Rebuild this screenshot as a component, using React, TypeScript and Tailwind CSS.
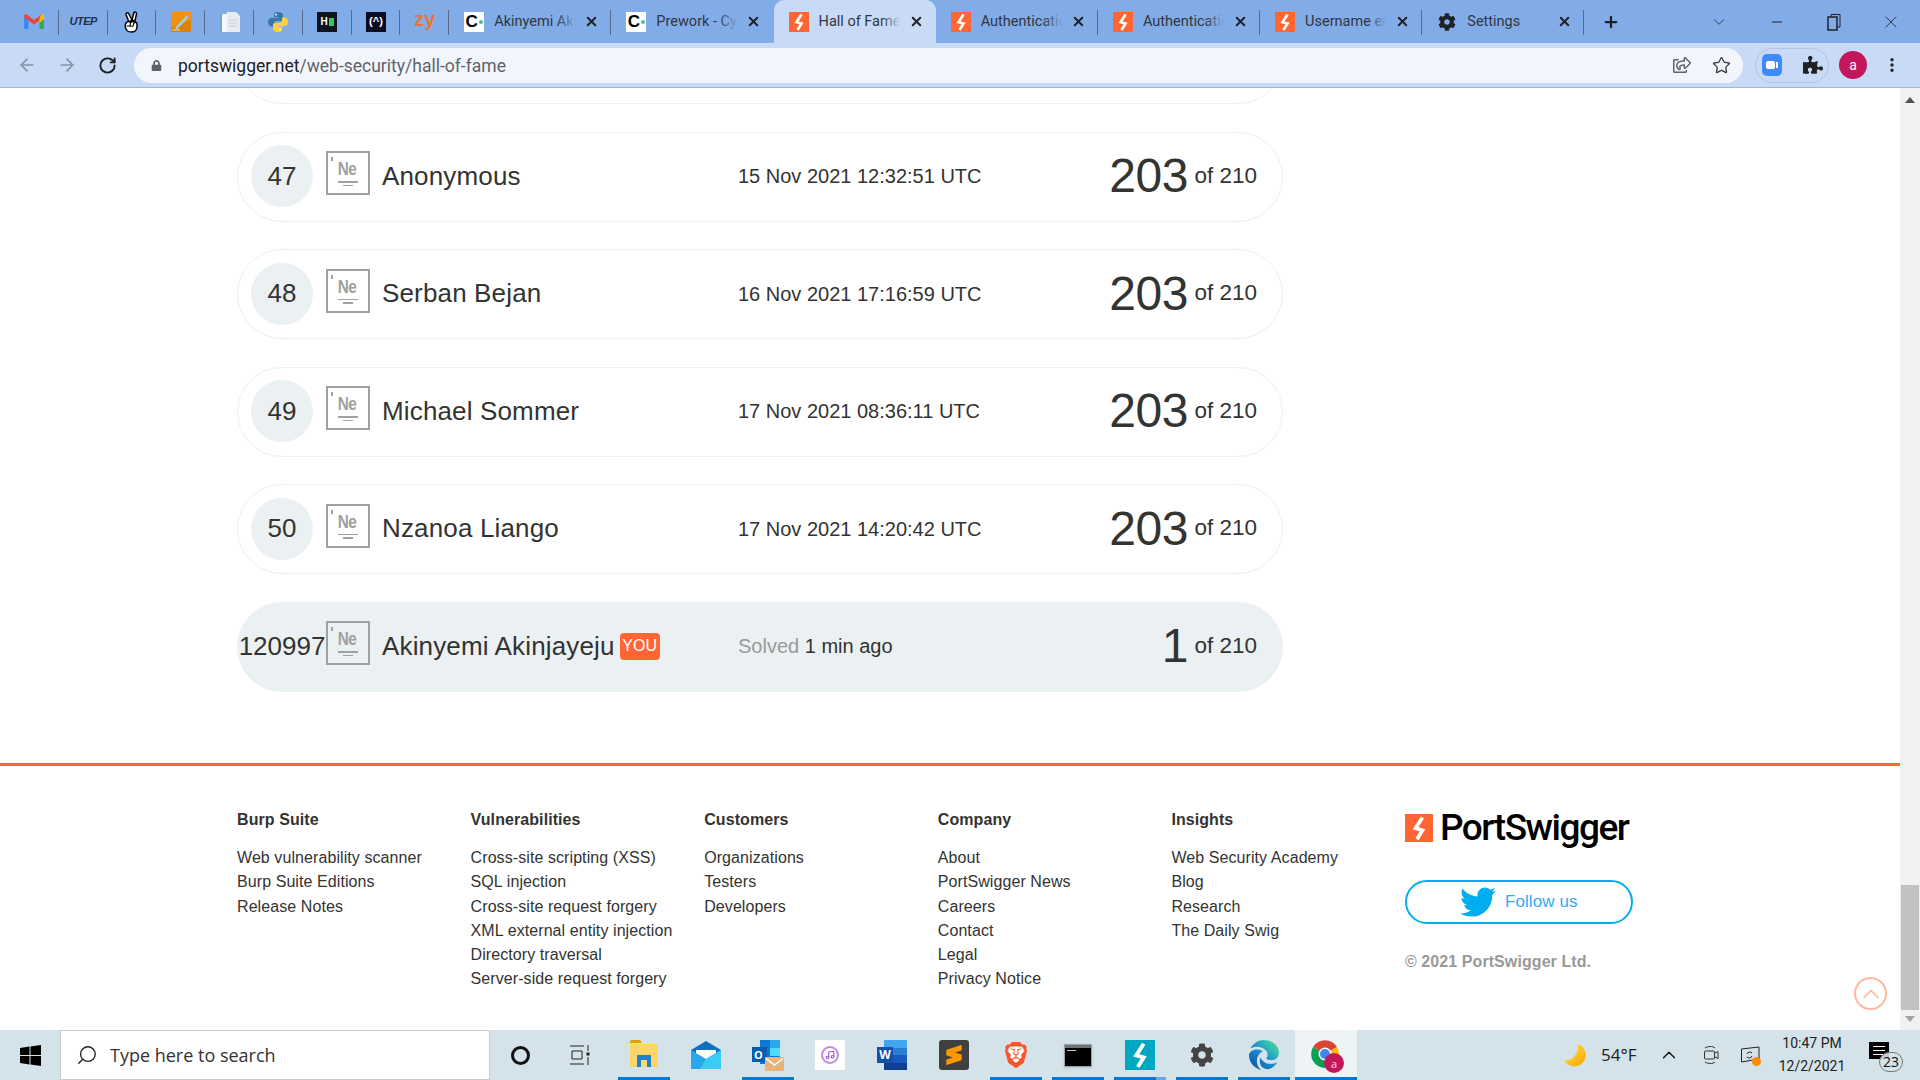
import type { ReactNode } from "react"
import { ArrowLeft, ArrowRight, ChevronDown, ChevronUp, EllipsisVertical, Minus, Music, Plus, RotateCw, Search, Star, X } from "lucide-react"
import { FaCog, FaLock, FaPuzzlePiece, FaRegShareSquare, FaTwitter } from "react-icons/fa"
import { FaEdge } from "react-icons/fa6"
import { SiBrave, SiSublimetext } from "react-icons/si"

const ROWS = [
  { rank: 47, name: "Anonymous", date: "15 Nov 2021 12:32:51 UTC" },
  { rank: 48, name: "Serban Bejan", date: "16 Nov 2021 17:16:59 UTC" },
  { rank: 49, name: "Michael Sommer", date: "17 Nov 2021 08:36:11 UTC" },
  { rank: 50, name: "Nzanoa Liango", date: "17 Nov 2021 14:20:42 UTC" },
]

const FOOTER = [
  { title: "Burp Suite", links: ["Web vulnerability scanner", "Burp Suite Editions", "Release Notes"] },
  {
    title: "Vulnerabilities",
    links: [
      "Cross-site scripting (XSS)",
      "SQL injection",
      "Cross-site request forgery",
      "XML external entity injection",
      "Directory traversal",
      "Server-side request forgery",
    ],
  },
  { title: "Customers", links: ["Organizations", "Testers", "Developers"] },
  { title: "Company", links: ["About", "PortSwigger News", "Careers", "Contact", "Legal", "Privacy Notice"] },
  { title: "Insights", links: ["Web Security Academy", "Blog", "Research", "The Daily Swig"] },
]

function Bolt({ size, bg, className = "" }: { size: number; bg: string; className?: string }) {
  return (
    <svg width={size} height={size} viewBox="0 0 20 20" className={className}>
      <rect width="20" height="20" fill={bg} />
      <path d="M12.5 2.5 7.5 10.2l5 1.4L8.5 18" fill="none" stroke="#fff" strokeWidth="2.6" />
    </svg>
  )
}

function GmailIcon() {
  return (
    <svg width="20" height="15" viewBox="0 0 20 15">
      <path d="M0 3v10.5A1.5 1.5 0 0 0 1.5 15H4.500V5z" fill="#4285f4" />
      <path d="M20 3v10.500a1.500 1.500 0 0 1-1.500 1.500H15.500V5z" fill="#34a853" />
      <path d="M0 3 10 10.500 20 3 17.500 .5 10 6 2.500 .5C1 -.5 0 1 0 3z" fill="#ea4335" />
      <path d="M15.500 4 15.500 8.700 20 5.300V2.500C20 .5 18.500 -.4 17 .7z" fill="#fbbc04" />
    </svg>
  )
}

function PeaceIcon() {
  return (
    <svg width="20" height="22" viewBox="0 0 20 22" fill="#fff" stroke="#000" strokeWidth="1.500">
      <path d="M7 11 4 3.500a1.400 1.400 0 0 1 2.600-1L10 9z" />
      <path d="M10 9l1.800-7a1.400 1.400 0 0 1 2.700.7L13 10z" />
      <path d="M5 11c-1.500 1-2 3-1.500 5.500C4 19.500 6.500 21 9.500 21s5.500-2 5.500-5v-3c0-1.500-1.500-2-2.500-1.500-1-1.200-3-1.200-4 0-.8-1-2.500-1.300-3.500-.5z" />
      <path d="M8.500 11.500 8 15M12 12l-1 3M5 15c2 0 5 0 6 .5" fill="none" strokeWidth="1.200" />
    </svg>
  )
}

function PencilIcon() {
  return (
    <svg width="20" height="20" viewBox="0 0 20 20">
      <rect width="20" height="20" fill="#f0920f" />
      <path d="M0 16 20 8v12H0z" fill="#d88308" />
      <path d="M4 16 15 4l2 2L6 17.500z" fill="#9ed0e6" />
      <path d="M15 4 16.500 2.500l2 2L17 6z" fill="#d59acb" />
      <path d="M1 18h8" stroke="#f8d69a" />
    </svg>
  )
}

function DocsIcon() {
  return (
    <svg width="20" height="20" viewBox="0 0 20 20">
      <rect x="0" y="2" width="12" height="18" fill="#f4f7fb" />
      <rect x="0" y="2" width="2" height="18" fill="#6ea6d8" />
      <path d="M7 0h9l4 4v16H7z" fill="#e8ecf2" />
      <path d="M9 8h8M9 11h8M9 14h8" stroke="#c8ced8" />
    </svg>
  )
}

function PythonIcon() {
  return (
    <svg width="20" height="20" viewBox="0 0 20 20">
      <path d="M10 0C6 0 6 1.500 6 3.500V5h4.200v.800H4C1.500 5.800 0 7.500 0 10.200s1.500 4.300 3.500 4.300H6v-2.700c0-1.800 1.200-2.800 3-2.800h4c1.500 0 2-1 2-2V3.500C15 1.500 13.500 0 10 0z" fill="#3a77a8" />
      <path d="M10 20c4 0 4-1.500 4-3.500V15H9.800v-.8H16c2.500 0 4-1.700 4-4.400s-1.500-4.300-3.500-4.300H14v2.700c0 1.800-1.200 2.800-3 2.800H7c-1.500 0-2 1-2 2v3.500C5 18.500 6.500 20 10 20z" fill="#fdd23c" />
      <circle cx="8" cy="2.500" r=".9" fill="#fff" />
      <circle cx="12" cy="17.500" r=".9" fill="#fff" />
    </svg>
  )
}

function CodepathIcon() {
  return (
    <div className="w-5 h-5 bg-white flex items-center justify-center gap-px">
      <span className="text-[17px] leading-none font-bold text-black font-['Liberation_Sans',sans-serif]">C</span>
      <div className="w-[4px] h-[4px] rounded-full bg-[#4cc38a]" />
    </div>
  )
}

const PINNED: ReactNode[] = [
  <GmailIcon />,
  <span className="text-[11px] font-bold italic tracking-[-0.5px] text-[#22304f] font-['Liberation_Sans',sans-serif]">UTEP</span>,
  <PeaceIcon />,
  <PencilIcon />,
  <DocsIcon />,
  <PythonIcon />,
  <div className="w-5 h-5 bg-[#0e141e] flex items-center justify-center gap-px">
    <span className="text-[10px] leading-none font-bold text-white font-['Liberation_Sans',sans-serif]">H</span>
    <div className="w-[5px] h-[8px] bg-[#2ec866]" />
  </div>,
  <div className="w-5 h-5 bg-[#0a0a23] flex items-center justify-center text-white text-[11px] leading-none font-bold font-['Liberation_Sans',sans-serif]">(^)</div>,
  <span className="text-[20px] leading-none font-bold text-[#e8743b] -mt-[6px] font-['Liberation_Sans',sans-serif]">zy</span>,
]

const TABS: { title: string; icon: ReactNode; active?: boolean; noSep?: boolean }[] = [
  { title: "Akinyemi Akinjayeju", icon: <CodepathIcon /> },
  { title: "Prework - Cybersecurity", icon: <CodepathIcon />, noSep: true },
  { title: "Hall of Fame", icon: <Bolt size={20} bg="#ff6633" />, active: true, noSep: true },
  { title: "Authentication", icon: <Bolt size={20} bg="#ff6633" /> },
  { title: "Authentication", icon: <Bolt size={20} bg="#ff6633" /> },
  { title: "Username enum", icon: <Bolt size={20} bg="#ff6633" /> },
  { title: "Settings", icon: <FaCog size={18} className="text-[#202124]" /> },
]

function TabBar() {
  return (
    <div className="h-[43px] bg-[#82ace8] flex items-stretch pl-[10px] flex-none">
      {PINNED.map((icon, i) => (
        <div key={i} className="w-[48.8px] flex-none flex items-center justify-center relative">
          {icon}
          <div className="absolute right-0 top-[10px] h-[25px] w-px bg-[#54698c]" />
        </div>
      ))}
      {TABS.map((tab, i) => (
        <div
          key={i}
          className={
            tab.active
              ? "w-[162.2px] flex-none flex items-center relative bg-[#c9daf6] rounded-t-[10px]"
              : "w-[162.2px] flex-none flex items-center relative"
          }
        >
          <div className="w-5 h-5 ml-[15px] flex-none flex items-center justify-center">{tab.icon}</div>
          <div className="relative ml-[10px] w-[82px] overflow-hidden whitespace-nowrap text-[14.500px] text-[#2f3640] font-['Roboto',sans-serif]">
            {tab.title}
            <div
              className={
                tab.active
                  ? "absolute right-0 top-0 bottom-0 w-5 bg-gradient-to-r from-transparent to-[#c9daf6]"
                  : "absolute right-0 top-0 bottom-0 w-5 bg-gradient-to-r from-transparent to-[#82ace8]"
              }
            />
          </div>
          <X size={15} strokeWidth={3.2} className="text-[#202124] ml-[8px] flex-none" />
          {!tab.noSep && <div className="absolute right-0 top-[10px] h-[25px] w-px bg-[#54698c]" />}
        </div>
      ))}
      <div className="flex items-center ml-[18px]">
        <Plus size={18} strokeWidth={3} className="text-[#202124]" />
        <ChevronDown size={18} strokeWidth={1} className="text-[#202124] ml-[90px]" />
        <Minus size={16} strokeWidth={1.5} className="text-[#202124] ml-[41px]" />
        <svg width="14" height="18" viewBox="0 0 14 18" className="ml-[42px]">
          <rect x="1" y="4" width="9" height="13" fill="none" stroke="#202124" strokeWidth="1.500" />
          <path d="M4 4V1.500h9V14h-3" fill="none" stroke="#202124" />
        </svg>
        <X size={20} strokeWidth={1} className="text-[#202124] ml-[40px]" />
      </div>
    </div>
  )
}

function ToolBar() {
  return (
    <div className="h-[45px] bg-[#c9daf6] border-b border-[#a5b6d0] flex items-center pl-[17px] flex-none">
      <ArrowLeft size={20} className="text-[#8792a6]" />
      <ArrowRight size={20} className="text-[#8792a6] ml-[20px]" />
      <RotateCw size={19} strokeWidth={2.4} className="text-[#202124] ml-[21px]" />
      <div className="ml-[17px] w-[1609px] h-[35px] rounded-full bg-[#f2f6fc] flex items-center pl-[17px] pr-[12px]">
        <FaLock size={11} className="text-[#5f6368]" />
        <span className="ml-[16px] pt-[2px] text-[17.500px] text-[#5f6368] font-['Roboto',sans-serif]">
          <span className="text-[#202124]">portswigger.net</span>/web-security/hall-of-fame
        </span>
        <FaRegShareSquare size={18} className="text-[#5f6368] ml-auto" />
        <Star size={19} strokeWidth={1.700} className="text-[#3c4043] ml-[21px]" />
      </div>
      <div className="ml-[12px] w-[74px] h-[35px] rounded-full border border-[#b3c5e3] flex items-center pl-[6px]">
        <div className="w-[20px] h-[22px] rounded-[5px] bg-[#3d8bfd] flex items-center justify-center gap-px">
          <div className="w-[9px] h-[8px] rounded-[2px] bg-white" />
          <div className="w-[2px] h-[6px] bg-white" />
        </div>
        <FaPuzzlePiece size={20} className="text-[#202124] ml-[21px]" />
      </div>
      <div className="ml-[10px] w-[28px] h-[28px] rounded-full bg-[#c2185b] flex items-center justify-center text-white text-[14px] font-['Roboto',sans-serif]">a</div>
      <EllipsisVertical size={18} strokeWidth={2.600} className="text-[#202124] ml-[16px]" />
    </div>
  )
}

function NeIcon() {
  return (
    <div className="relative w-[44px] h-[44px] flex-none border-2 border-[#a0a0a0] flex flex-col items-center -mt-[6px] pr-px">
      <div className="absolute left-[3px] top-[4px] w-[1.500px] h-[4px] bg-[#a0a0a0]" />
      <span className="text-[18px] leading-[15px] mt-[9px] font-bold text-[#a0a0a0] tracking-[-0.5px] scale-x-[0.85]">Ne</span>
      <div className="w-[20px] h-[1.500px] bg-[#a0a0a0] mt-[4px]" />
      <div className="w-[10px] h-[1.500px] bg-[#a0a0a0] mt-[2px]" />
    </div>
  )
}

function Score({ value }: { value: number }) {
  return (
    <div className="ml-auto flex items-center gap-[6.500px] pr-[25px]">
      <span className="text-[48px] leading-none tracking-[-0.5px]">{value}</span>
      <span className="text-[22.500px] leading-none">of 210</span>
    </div>
  )
}

function Row({ rank, name, date }: { rank: number; name: string; date: string }) {
  return (
    <div className="flex items-center h-[90px] rounded-[45px] border border-[#ebf0f2] mb-[27.500px] flex-none pb-[1px]">
      <div className="ml-[13px] w-[62px] h-[62px] rounded-full bg-[#ebf0f2] flex items-center justify-center text-[26px] flex-none">{rank}</div>
      <div className="ml-[13px] flex items-center flex-none"><NeIcon /></div>
      <div className="ml-[12px] w-[356px] flex-none text-[26px] tracking-[0.150px]">{name}</div>
      <div className="text-[20px]">{date}</div>
      <Score value={203} />
    </div>
  )
}

function YouRow() {
  return (
    <div className="flex items-center h-[90px] rounded-[45px] bg-[#ebf0f2] border border-[#ebf0f2] flex-none pb-[1px]">
      <div className="ml-[13px] w-[62px] h-[62px] flex items-center justify-center text-[26px] flex-none whitespace-nowrap">120997</div>
      <div className="ml-[13px] flex items-center flex-none"><NeIcon /></div>
      <div className="ml-[12px] w-[356px] flex-none flex items-center text-[26px] tracking-[0.150px]">
        Akinyemi Akinjayeju
        <span className="ml-[5px] h-[27px] w-[40px] rounded-[4px] bg-[#ff6633] text-white text-[16px] tracking-normal flex items-center justify-center">YOU</span>
      </div>
      <div className="text-[20px] text-[#999]">Solved <span className="text-[#333332]">1 min ago</span></div>
      <Score value={1} />
    </div>
  )
}

function Footer() {
  return (
    <div className="mt-[71.500px] border-t-[3px] border-[#ff6633] pl-[237px] pt-[42px] flex text-[16px] leading-[24.200px] tracking-[0.080px]">
      {FOOTER.map((col) => (
        <div key={col.title} className="w-[233.600px] flex-none">
          <div className="font-bold mb-[14px]">{col.title}</div>
          {col.links.map((l) => (
            <div key={l}>{l}</div>
          ))}
        </div>
      ))}
      <div className="flex-none -mt-px">
        <div className="mt-[6px] h-[29px] flex items-center">
          <Bolt size={28} bg="#ff6633" />
          <span className="ml-[7px] text-[37px] leading-none font-medium tracking-[-1.500px] text-black font-['Roboto',sans-serif]">PortSwigger</span>
        </div>
        <div className="mt-[38px] w-[228px] h-[44px] rounded-full border-2 border-[#00aeef] flex items-center pl-[53px] text-[#35a9f4]">
          <FaTwitter size={36} className="text-[#00aeef]" />
          <span className="ml-[9px] text-[17px]">Follow us</span>
        </div>
        <div className="mt-[26px] font-bold text-[#999]">© 2021 PortSwigger Ltd.</div>
      </div>
    </div>
  )
}

function ScrollBar() {
  return (
    <div className="w-[20px] flex-none bg-[#f1f1f1] flex flex-col items-center">
      <svg width="10" height="6" viewBox="0 0 10 6" className="mt-[9px]">
        <path d="M5 0 10 6H0z" fill="#505050" />
      </svg>
      <div className="mt-[782px] w-[18px] h-[125px] bg-[#c1c1c1] flex-none" />
      <svg width="10" height="6" viewBox="0 0 10 6" className="mt-[6px]">
        <path d="M5 6 10 0H0z" fill="#a3a3a3" />
      </svg>
    </div>
  )
}

function Slot({ children, line = false, wide = false, w = "w-[62px]", className = "" }: { children: ReactNode; line?: boolean; wide?: boolean; w?: string; className?: string }) {
  return (
    <div className={`${w} flex-none h-full relative flex items-center justify-center ${className}`}>
      {children}
      {line && <div className={wide ? "absolute bottom-0 left-0 right-0 h-[3px] bg-[#0078d4]" : "absolute bottom-0 left-[5px] right-[5px] h-[3px] bg-[#0078d4]"} />}
    </div>
  )
}

function TaskBar() {
  return (
    <div className="h-[50px] bg-[#d4e3ea] flex items-stretch flex-none font-['Open_Sans',sans-serif] relative">
      <svg width="0" height="0" className="absolute">
        <defs>
          <linearGradient id="edgeGrad" x1="0" y1="1" x2="1" y2="0">
            <stop offset="0" stopColor="#0f4f94" />
            <stop offset=".45" stopColor="#1b87d0" />
            <stop offset=".75" stopColor="#35c1b0" />
            <stop offset="1" stopColor="#6fd66a" />
          </linearGradient>
        </defs>
      </svg>
      <div className="w-[60px] flex-none flex items-center justify-center">
        <svg width="21" height="21" viewBox="0 0 21 21">
          <path d="M0 3 9.500 1.600V10H0zM10.500 1.500 21 0v10H10.500zM0 11h9.500v8.400L0 18zM10.500 11H21v10l-10.500-1.500z" fill="#000" />
        </svg>
      </div>
      <div className="w-[430px] flex-none bg-white border border-[#cccccc] flex items-center pl-[15px]">
        <Search size={22} strokeWidth={1.500} className="text-[#222] -scale-x-100" />
        <span className="ml-[12px] text-[18px] text-[#333]">Type here to search</span>
      </div>
      <Slot w="w-[60px]">
        <div className="w-[19px] h-[19px] rounded-full border-[3px] border-[#111]" />
      </Slot>
      <Slot w="w-[63px]">
        <svg width="20" height="24" viewBox="0 0 20 24" fill="none" stroke="#222" className="-ml-[4px]">
          <path d="M0 3h14M0 21h14M2 8h10v8H2zM18 2v6M18 14v8" />
          <rect x="16.500" y="9.500" width="3" height="3" fill="#222" stroke="none" />
        </svg>
      </Slot>
      <Slot line>
        <svg width="28" height="30" viewBox="0 0 28 30">
          <path d="M0 2a2 2 0 0 1 2-2h8l2 3H0z" fill="#e0a100" />
          <rect y="4" width="28" height="23" rx="1" fill="#fdd66b" />
          <path d="M7 27V15h14v12h-4v-7h-6v7z" fill="#1f82d1" />
        </svg>
      </Slot>
      <Slot>
        <svg width="30" height="28" viewBox="0 0 30 28">
          <path d="M0 9 15 0l15 9v19H0z" fill="#0f6fc0" />
          <path d="M5 9h20v5l-10 6-10-6z" fill="#fff" />
          <path d="M0 9v19h30V9L15 18z" fill="#28a8ea" />
          <path d="M15 18 30 9v19H9z" fill="#3ccbf4" />
        </svg>
      </Slot>
      <Slot line>
        <div className="relative w-[32px] h-[32px]">
          <svg width="32" height="32" viewBox="0 0 32 32">
            <rect x="8" y="1" width="20" height="24" fill="#0f78d4" />
            <rect x="18" y="1" width="10" height="8" fill="#28a8ea" />
            <rect x="18" y="9" width="10" height="8" fill="#50d9ff" />
            <rect y="8" width="15" height="15" fill="#0a5cb0" />
            <rect x="13" y="18" width="19" height="14" fill="#e8b37a" />
            <path d="M14 19.500 22.500 26 31 19.500" fill="none" stroke="#fff" strokeWidth="1.500" />
          </svg>
          <span className="absolute left-[2px] top-[9px] text-[11px] leading-[13px] font-bold text-white">O</span>
        </div>
      </Slot>
      <Slot>
        <div className="w-[30px] h-[30px] bg-white flex items-center justify-center">
          <div className="w-[18px] h-[18px] rounded-full border-2 border-[#c08bdc] flex items-center justify-center">
            <Music size={10} strokeWidth={2.600} className="text-[#a44fd0]" />
          </div>
        </div>
      </Slot>
      <Slot>
        <div className="relative w-[30px] h-[30px]">
          <svg width="30" height="30" viewBox="0 0 30 30">
            <rect x="7" width="23" height="30" rx="1" fill="#2b7cd3" />
            <rect x="7" width="23" height="8" fill="#41a5ee" />
            <rect x="7" y="15" width="23" height="8" fill="#185abd" />
            <rect x="7" y="23" width="23" height="7" fill="#103f91" />
            <rect y="7" width="16" height="16" fill="#1450a8" />
          </svg>
          <span className="absolute left-0 top-[7px] w-[16px] text-center text-[12px] leading-[16px] font-bold text-white">W</span>
        </div>
      </Slot>
      <Slot>
        <div className="w-[30px] h-[30px] rounded-[3px] bg-[#404040] flex items-center justify-center">
          <SiSublimetext size={20} className="text-[#ff9800]" />
        </div>
      </Slot>
      <Slot line>
        <div className="relative w-[26px] h-[30px] flex items-center justify-center">
          <div className="absolute left-[5px] right-[5px] top-[7px] bottom-[7px] bg-white rounded-full" />
          <SiBrave size={30} className="text-[#fb542b] relative" />
        </div>
      </Slot>
      <Slot line>
        <div className="w-[28px] h-[23px] bg-black border border-[#9aa3a8] shadow-sm flex flex-col">
          <div className="h-[3px] bg-[#6c7478]" />
          <div className="w-[9px] h-px bg-[#c8c8c8] mt-[2px] ml-[2px]" />
        </div>
      </Slot>
      <Slot line>
        <Bolt size={30} bg="#00a7c2" />
        <div className="absolute bottom-0 right-[5px] w-[10px] h-[3px] bg-[#64a8e8] z-10" />
      </Slot>
      <Slot line>
        <FaCog size={24} className="text-[#444]" />
      </Slot>
      <Slot line>
        <FaEdge size={30} fill="url(#edgeGrad)" />
      </Slot>
      <Slot line wide className="bg-[#eef3f6]">
        <div className="relative w-[30px] h-[30px]">
          <svg width="28" height="28" viewBox="0 0 28 28">
            <path d="M14 14 2 7a14 14 0 0 1 24 0z" fill="#db4437" />
            <path d="M14 14 26 7a14 14 0 0 1-12 21z" fill="#fbbc04" />
            <path d="M14 14v14A14 14 0 0 1 2 7z" fill="#0f9d58" />
            <circle cx="14" cy="14" r="6.500" fill="#fff" />
            <circle cx="14" cy="14" r="5" fill="#4285f4" />
          </svg>
          <div className="absolute -right-[3px] -bottom-[3px] w-[20px] h-[20px] rounded-full bg-[#c2185b] flex items-center justify-center text-[11px] leading-none text-white/80">a</div>
        </div>
      </Slot>
      <div className="ml-auto flex items-center pr-[31px]">
        <svg width="23" height="23" viewBox="0 0 23 23">
          <defs>
            <linearGradient id="moonGrad" x1="0" y1="0" x2="1" y2="1">
              <stop offset="0" stopColor="#ffe14d" />
              <stop offset="1" stopColor="#f7a600" />
            </linearGradient>
          </defs>
          <path d="M14 0a11.500 11.500 0 1 1-14 16C7 18 15 11 14 0z" fill="url(#moonGrad)" />
        </svg>
        <span className="ml-[14px] w-[36px] text-[17px] text-[#222] whitespace-nowrap">54°F</span>
        <ChevronUp size={22} strokeWidth={1.500} className="text-[#111] ml-[21px]" />
        <svg width="16" height="20" viewBox="0 0 16 20" fill="none" stroke="#333" className="ml-[23px]">
          <path d="M2 3c3-2 8-2 10 0M2 17c3 2 8 2 10 0" />
          <rect x="1.500" y="6" width="10" height="8" rx="1" />
          <path d="M12 8l3-1.500v7L12 12" />
        </svg>
        <div className="relative ml-[21px] w-[20px] h-[18px]">
          <svg width="20" height="18" viewBox="0 0 20 18" fill="none" stroke="#222">
            <path d="M1.500 3 19 1v12L1.500 16z" />
            <path d="M7 8a3 3 0 0 1 5-1M12 10a3 3 0 0 1-5 1" />
          </svg>
          <div className="absolute -right-[1px] -bottom-[2px] w-[9px] h-[9px] rounded-full bg-[#ff8c00]" />
        </div>
        <div className="ml-[14px] w-[76px] text-center text-[14px] leading-[23px] text-[#222] whitespace-nowrap font-['Roboto',sans-serif]">
          <div>10:47 PM</div>
          <div>12/2/2021</div>
        </div>
        <div className="relative ml-[19px] w-[20px] h-[17px] bg-black flex flex-col gap-[3px] items-center justify-center -mt-[10px]">
          <div className="w-[12px] h-px bg-white" />
          <div className="w-[12px] h-px bg-white" />
          <div className="w-[12px] h-px bg-white" />
          <div className="absolute -right-[14px] -bottom-[13px] w-[24px] h-[20px] rounded-full bg-[#d4e3ea]/90 border border-[#777] flex items-center justify-center text-[14px] text-[#111]">23</div>
        </div>
      </div>
    </div>
  )
}

export default function App() {
  return (
    <div className="w-[1920px] h-[1080px] flex flex-col overflow-hidden bg-white">
      <TabBar />
      <ToolBar />
      <div className="flex-1 flex min-h-0 overflow-hidden">
        <div className="relative flex-1 overflow-hidden text-[#333332] font-['Liberation_Sans',Arial,sans-serif]">
          <div className="-mt-[74px] ml-[237px] w-[1046px] flex flex-col">
            <div className="h-[90px] rounded-[45px] border border-[#ebf0f2] mb-[27.500px] flex-none" />
            {ROWS.map((r) => (
              <Row key={r.rank} {...r} />
            ))}
            <YouRow />
          </div>
          <Footer />
          <div className="absolute right-[13px] bottom-[20px] w-[33px] h-[33px] rounded-full border-2 border-[#ffb9a3] flex items-center justify-center">
            <ChevronUp size={28} strokeWidth={1.500} className="text-[#ffb9a3]" />
          </div>
        </div>
        <ScrollBar />
      </div>
      <TaskBar />
    </div>
  )
}
